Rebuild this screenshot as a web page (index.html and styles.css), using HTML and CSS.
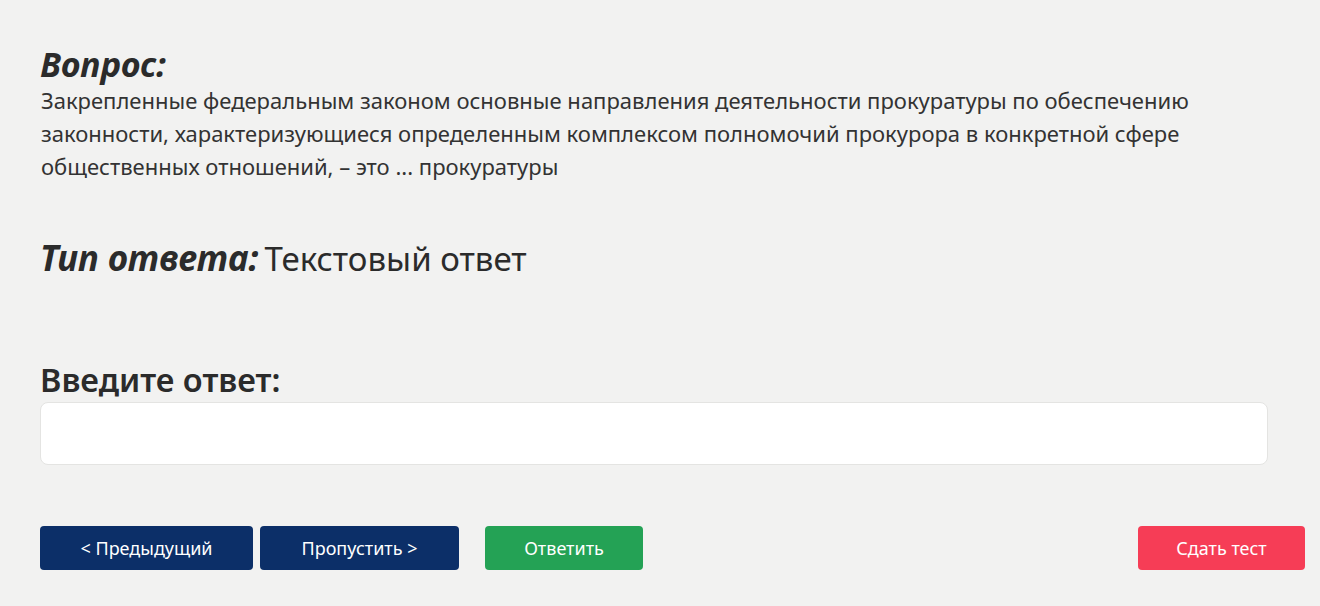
FILE: index.html
```html
<!DOCTYPE html>
<html lang="ru">
<head>
  <meta charset="UTF-8">
  <meta name="viewport" content="width=device-width, initial-scale=1.0">
  <title>Тест</title>
  <link rel="stylesheet" href="styles.css">
</head>
<body>
  <div class="quiz">
    <div class="question">
      <h2 class="label">Вопрос:</h2>
      <p class="question-text">Закрепленные федеральным законом основные направления деятельности прокуратуры по обеспечению законности, характеризующиеся определенным комплексом полномочий прокурора в конкретной сфере общественных отношений, – это ... прокуратуры</p>
    </div>

    <div class="answer-type">
      <span class="label">Тип ответа:</span>
      <span class="type-value">Текстовый ответ</span>
    </div>

    <div class="answer-form">
      <h3>Введите ответ:</h3>
      <input type="text" class="answer-input">
    </div>

    <div class="controls">
      <button class="btn btn-nav">&lt; Предыдущий</button>
      <button class="btn btn-nav btn-skip">Пропустить &gt;</button>
      <button class="btn btn-answer">Ответить</button>
      <button class="btn btn-finish">Сдать тест</button>
    </div>
  </div>
</body>
</html>
```

FILE: styles.css
```css
/* Общие стили */
* {
  margin: 0;
  padding: 0;
  box-sizing: border-box;
}

body {
  background-color: #f2f2f1;
  color: #2b2b2b;
  font-family: "Noto Sans", "Open Sans", sans-serif;
}

.quiz {
  padding: 44px 15px 0 40px;
}

.label {
  font-size: 34px;
  font-weight: 700;
  font-style: italic;
  line-height: 40px;
}

.question-text {
  font-size: 22px;
  line-height: 33px;
  margin-left: 1px;
  max-width: 1200px;
  color: #333;
}

/* Тип ответа */
.answer-type {
  margin-top: 55px;
  display: flex;
  align-items: baseline;
  gap: 6px;
  line-height: 40px;
}

.answer-type .label {
  font-size: 35px;
}

.type-value {
  font-size: 33px;
  font-weight: 400;
}

/* Поле ответа */
.answer-form {
  margin-top: 81px;
  width: 1228px;
}

.answer-form h3 {
  font-size: 32.5px;
  font-weight: 600;
  line-height: 40px;
}

.answer-input {
  display: block;
  width: 100%;
  height: 63px;
  margin-top: 2px;
  border: 1px solid #e4e4e2;
  border-radius: 8px;
  background-color: #fff;
  font-size: 18px;
  padding: 0 14px;
}

/* Кнопки */
.controls {
  margin-top: 61px;
  display: flex;
  gap: 7px;
}

.btn {
  height: 44px;
  border: none;
  border-radius: 4px;
  color: #fff;
  font-family: "Noto Sans", sans-serif;
  font-size: 18px;
  cursor: pointer;
}

.btn-nav {
  background-color: #0c2f68;
  width: 213px;
}

.btn-skip {
  width: 199px;
}

.btn-answer {
  background-color: #24a255;
  width: 158px;
  margin-left: 19px;
}

.btn-finish {
  background-color: #f63d56;
  width: 167px;
  margin-left: auto;
}
```
